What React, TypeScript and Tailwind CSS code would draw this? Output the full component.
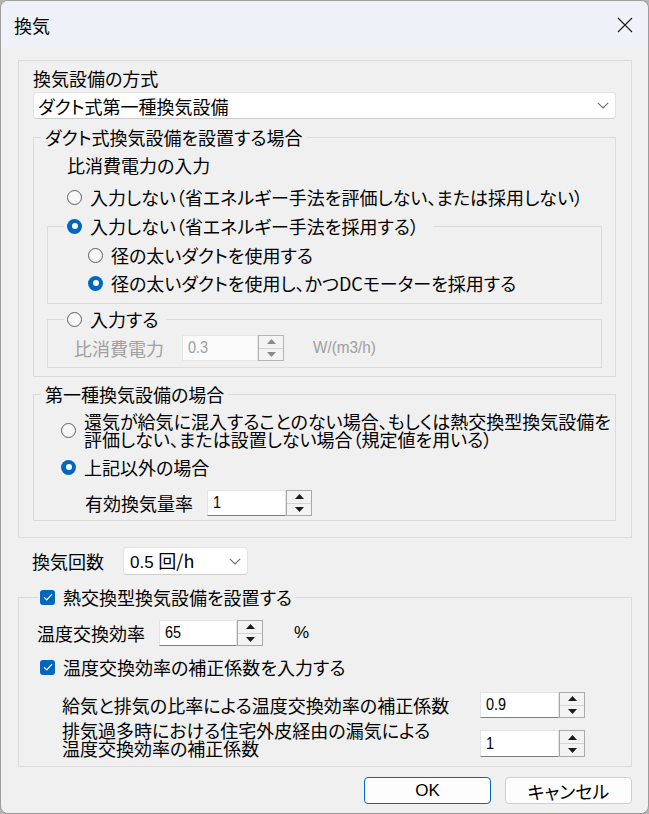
import React from "react";

function Radio({ checked, disabled }: { checked?: boolean; disabled?: boolean }) {
  if (checked) {
    return (
      <span className="w-[15px] h-[15px] rounded-full bg-[#0067c0] flex items-center justify-center shrink-0">
        <span className="w-[6px] h-[6px] rounded-full bg-white" />
      </span>
    );
  }
  return (
    <span
      className={
        disabled
          ? "w-[15px] h-[15px] rounded-full border-[1.5px] border-[#a0a0a0] bg-[#f6f6f6] shrink-0"
          : "w-[15px] h-[15px] rounded-full border-[1.5px] border-[#5e5e5e] bg-[#f7f7f7] shrink-0"
      }
    />
  );
}

function Check() {
  return (
    <span className="w-[15px] h-[15px] rounded-[3px] bg-[#0067c0] flex items-center justify-center shrink-0">
      <svg width="10" height="8" viewBox="0 0 10 8" fill="none">
        <path d="M1 4.2 L3.8 6.8 L9 1.2" stroke="white" strokeWidth="1.2" />
      </svg>
    </span>
  );
}

function Chevron() {
  return (
    <svg width="12" height="7" viewBox="0 0 12 7" fill="none">
      <path d="M0.8 0.8 L6 6 L11.2 0.8" stroke="#6a6a6a" strokeWidth="1.1" />
    </svg>
  );
}

function Spin({ value, w, h = 26, disabled }: { value: string; w: number; h?: number; disabled?: boolean }) {
  const arrow = disabled ? "#8a8a8a" : "#1a1a1a";
  return (
    <div className="flex" style={{ height: h }}>
      <div
        className={
          disabled
            ? "bg-[#fafafa] border border-[#e6e6e6] pl-[5px] flex items-center text-[#a0a0a0] leading-[20px] font-['Liberation_Sans',sans-serif] text-[17px]"
            : "bg-white border border-[#e3e3e3] border-b-[#7d7d7d] pl-[5px] flex items-center leading-[20px] font-['Liberation_Sans',sans-serif] text-[17px]"
        }
        style={{ width: w }}
      >
        <span className="scale-x-[0.85] origin-left inline-block">{value}</span>
      </div>
      <div
        className={
          disabled
            ? "w-[26px] border border-[#b4b4b4] bg-[#f0f0f0] flex flex-col"
            : "w-[26px] border border-[#a9a9a9] bg-[#f0f0f0] flex flex-col"
        }
      >
        <div className="flex-1 flex items-center justify-center border-b border-[#d4d4d4] bg-[#f3f3f3]">
          <svg width="9" height="5" viewBox="0 0 9 5">
            <path d="M0 5 L4.5 0 L9 5 Z" fill={arrow} />
          </svg>
        </div>
        <div className="flex-1 flex items-center justify-center bg-[#f3f3f3]">
          <svg width="9" height="5" viewBox="0 0 9 5">
            <path d="M0 0 L4.5 5 L9 0 Z" fill={arrow} />
          </svg>
        </div>
      </div>
    </div>
  );
}

export default function App() {
  return (
    <div className="w-[649px] h-[814px] bg-[#b4b4b4] font-['Noto_Sans_CJK_JP',sans-serif] text-[18px] leading-[20px] text-black [font-feature-settings:'palt']">
      <div className="w-full h-full rounded-[8px] border border-[#9c9c9c] overflow-hidden flex flex-col bg-[#f0f0f0]">
        {/* Title bar */}
        <div className="h-[47px] shrink-0 bg-[#eff1f8] flex items-center justify-between pl-[13px] pr-[15px]">
          <span className="text-[18px] leading-[20px]">換気</span>
          <svg width="16" height="16" viewBox="0 0 16 16" fill="none">
            <path d="M1 1 L15 15 M15 1 L1 15" stroke="#1a1a1a" strokeWidth="1.1" />
          </svg>
        </div>

        {/* Body */}
        <div className="flex flex-col pt-[12px]">
          {/* Group 1 */}
          <div className="ml-[17px] mr-[16px] border border-[#dcdcdc] pt-[7px] pl-[14px] pr-[15px] pb-[16px] flex flex-col">
            <div className="h-[20px]">換気設備の方式</div>
            <div className="mt-[4px] h-[27px] bg-white border border-[#e3e3e3] border-b-[#cdcdcd] rounded-[4px] flex items-center justify-between pl-[4px] pr-[6px]">
              <span>ダクト式第一種換気設備</span>
              <Chevron />
            </div>

            {/* Group 2 */}
            <fieldset className="mt-[8px] border border-[#dcdcdc] pb-[8px]">
              <legend className="ml-[7px] px-[4px] leading-[20px]">ダクト式換気設備を設置する場合</legend>
              <div className="mt-[8px] pl-[33px] h-[20px]">比消費電力の入力</div>
              <div className="mt-[12px] pl-[33px] h-[20px] flex items-center">
                <Radio />
                <span className="ml-[8px]">入力しない（省エネルギー手法を評価しない、または採用しない）</span>
              </div>

              {/* Group 3 */}
              <fieldset className="mt-[9px] ml-[13px] mr-[13px] border border-[#dcdcdc] pb-[10px]">
                <legend className="ml-[16px] pl-[3px] pr-[14px] h-[20px]">
                  <span className="flex items-center h-[20px]">
                    <Radio checked />
                    <span className="ml-[8px]">入力しない（省エネルギー手法を採用する）</span>
                  </span>
                </legend>
                <div className="mt-[9px] pl-[40px] h-[20px] flex items-center">
                  <Radio />
                  <span className="ml-[8px]">径の太いダクトを使用する</span>
                </div>
                <div className="mt-[8px] pl-[40px] h-[20px] flex items-center">
                  <Radio checked />
                  <span className="ml-[8px]">径の太いダクトを使用し、かつDCモーターを採用する</span>
                </div>
              </fieldset>

              {/* Group 4 */}
              <fieldset className="mt-[5px] ml-[13px] mr-[13px] border border-[#dcdcdc] pb-[6px]">
                <legend className="ml-[16px] pl-[3px] pr-[8px] h-[20px]">
                  <span className="flex items-center h-[20px]">
                    <Radio />
                    <span className="ml-[8px]">入力する</span>
                  </span>
                </legend>
                <div className="mt-[6px] pl-[26px] flex items-center h-[26px]">
                  <span className="w-[108px] text-[#a0a0a0]">比消費電力</span>
                  <Spin value="0.3" w={76} disabled />
                  <span className="ml-[29px] text-[#a0a0a0] font-['Liberation_Sans',sans-serif] text-[17px] scale-x-[0.9] origin-left inline-block">W/(m3/h)</span>
                </div>
              </fieldset>
            </fieldset>

            {/* Group 5 */}
            <fieldset className="mt-[7px] border border-[#dcdcdc] pb-[4px]">
              <legend className="ml-[7px] px-[4px] leading-[20px]">第一種換気設備の場合</legend>
              <div className="mt-[8px] pl-[27px] flex items-center">
                <Radio />
                <span className="ml-[8px] flex flex-col">
                  <span className="h-[18px] leading-[18px]">還気が給気に混入することのない場合、もしくは熱交換型換気設備を</span>
                  <span className="h-[18px] leading-[18px]">評価しない、または設置しない場合（規定値を用いる）</span>
                </span>
              </div>
              <div className="mt-[9px] pl-[27px] h-[20px] flex items-center">
                <Radio checked />
                <span className="ml-[8px]">上記以外の場合</span>
              </div>
              <div className="mt-[13px] pl-[51px] h-[26px] flex items-center">
                <span className="w-[122px]">有効換気量率</span>
                <Spin value="1" w={79} />
              </div>
            </fieldset>
          </div>

          {/* 換気回数 */}
          <div className="mt-[9px] pl-[31px] flex items-center h-[28px]">
            <span className="w-[91px]">換気回数</span>
            <div className="w-[125px] h-[28px] bg-white border border-[#e3e3e3] border-b-[#cdcdcd] rounded-[4px] flex items-center justify-between pl-[6px] pr-[6px]">
              <span>
                <span className="font-['Liberation_Sans',sans-serif] text-[17px]">0.5 </span>回/h
              </span>
              <Chevron />
            </div>
          </div>

          {/* Group 6 */}
          <fieldset className="mt-[12px] ml-[17px] mr-[16px] border border-[#dcdcdc] pb-[9px]">
            <legend className="ml-[19px] pl-[2px] pr-[2px] h-[20px]">
              <span className="flex items-center h-[20px]">
                <Check />
                <span className="ml-[8px]">熱交換型換気設備を設置する</span>
              </span>
            </legend>
            <div className="mt-[13px] pl-[18px] h-[26px] flex items-center">
              <span className="w-[122px]">温度交換効率</span>
              <Spin value="65" w={78} />
              <span className="ml-[31px] font-['Liberation_Sans',sans-serif] text-[17px]">%</span>
            </div>
            <div className="mt-[11px] pl-[21px] h-[20px] flex items-center">
              <Check />
              <span className="ml-[8px]">温度交換効率の補正係数を入力する</span>
            </div>
            <div className="mt-[15px] pl-[43px] h-[26px] flex items-center">
              <span className="w-[418px]">給気と排気の比率による温度交換効率の補正係数</span>
              <Spin value="0.9" w={79} />
            </div>
            <div className="mt-[3px] pl-[43px] flex items-end">
              <span className="w-[418px] flex flex-col">
                <span className="h-[18px] leading-[18px]">排気過多時における住宅外皮経由の漏気による</span>
                <span className="h-[18px] leading-[18px]">温度交換効率の補正係数</span>
              </span>
              <Spin value="1" w={79} h={27} />
            </div>
          </fieldset>

          {/* Buttons */}
          <div className="mt-[10px] pr-[16px] flex justify-end gap-[14px]">
            <button className="w-[127px] h-[27px] rounded-[4px] border-[1.5px] border-[#0067c0] bg-[#fdfdfd] flex items-center justify-center text-[17px] font-['Liberation_Sans',sans-serif]">
              OK
            </button>
            <button className="w-[127px] h-[27px] rounded-[4px] border border-[#d0d0d0] bg-[#fdfdfd] flex items-center justify-center">
              キャンセル
            </button>
          </div>
        </div>
      </div>
    </div>
  );
}
